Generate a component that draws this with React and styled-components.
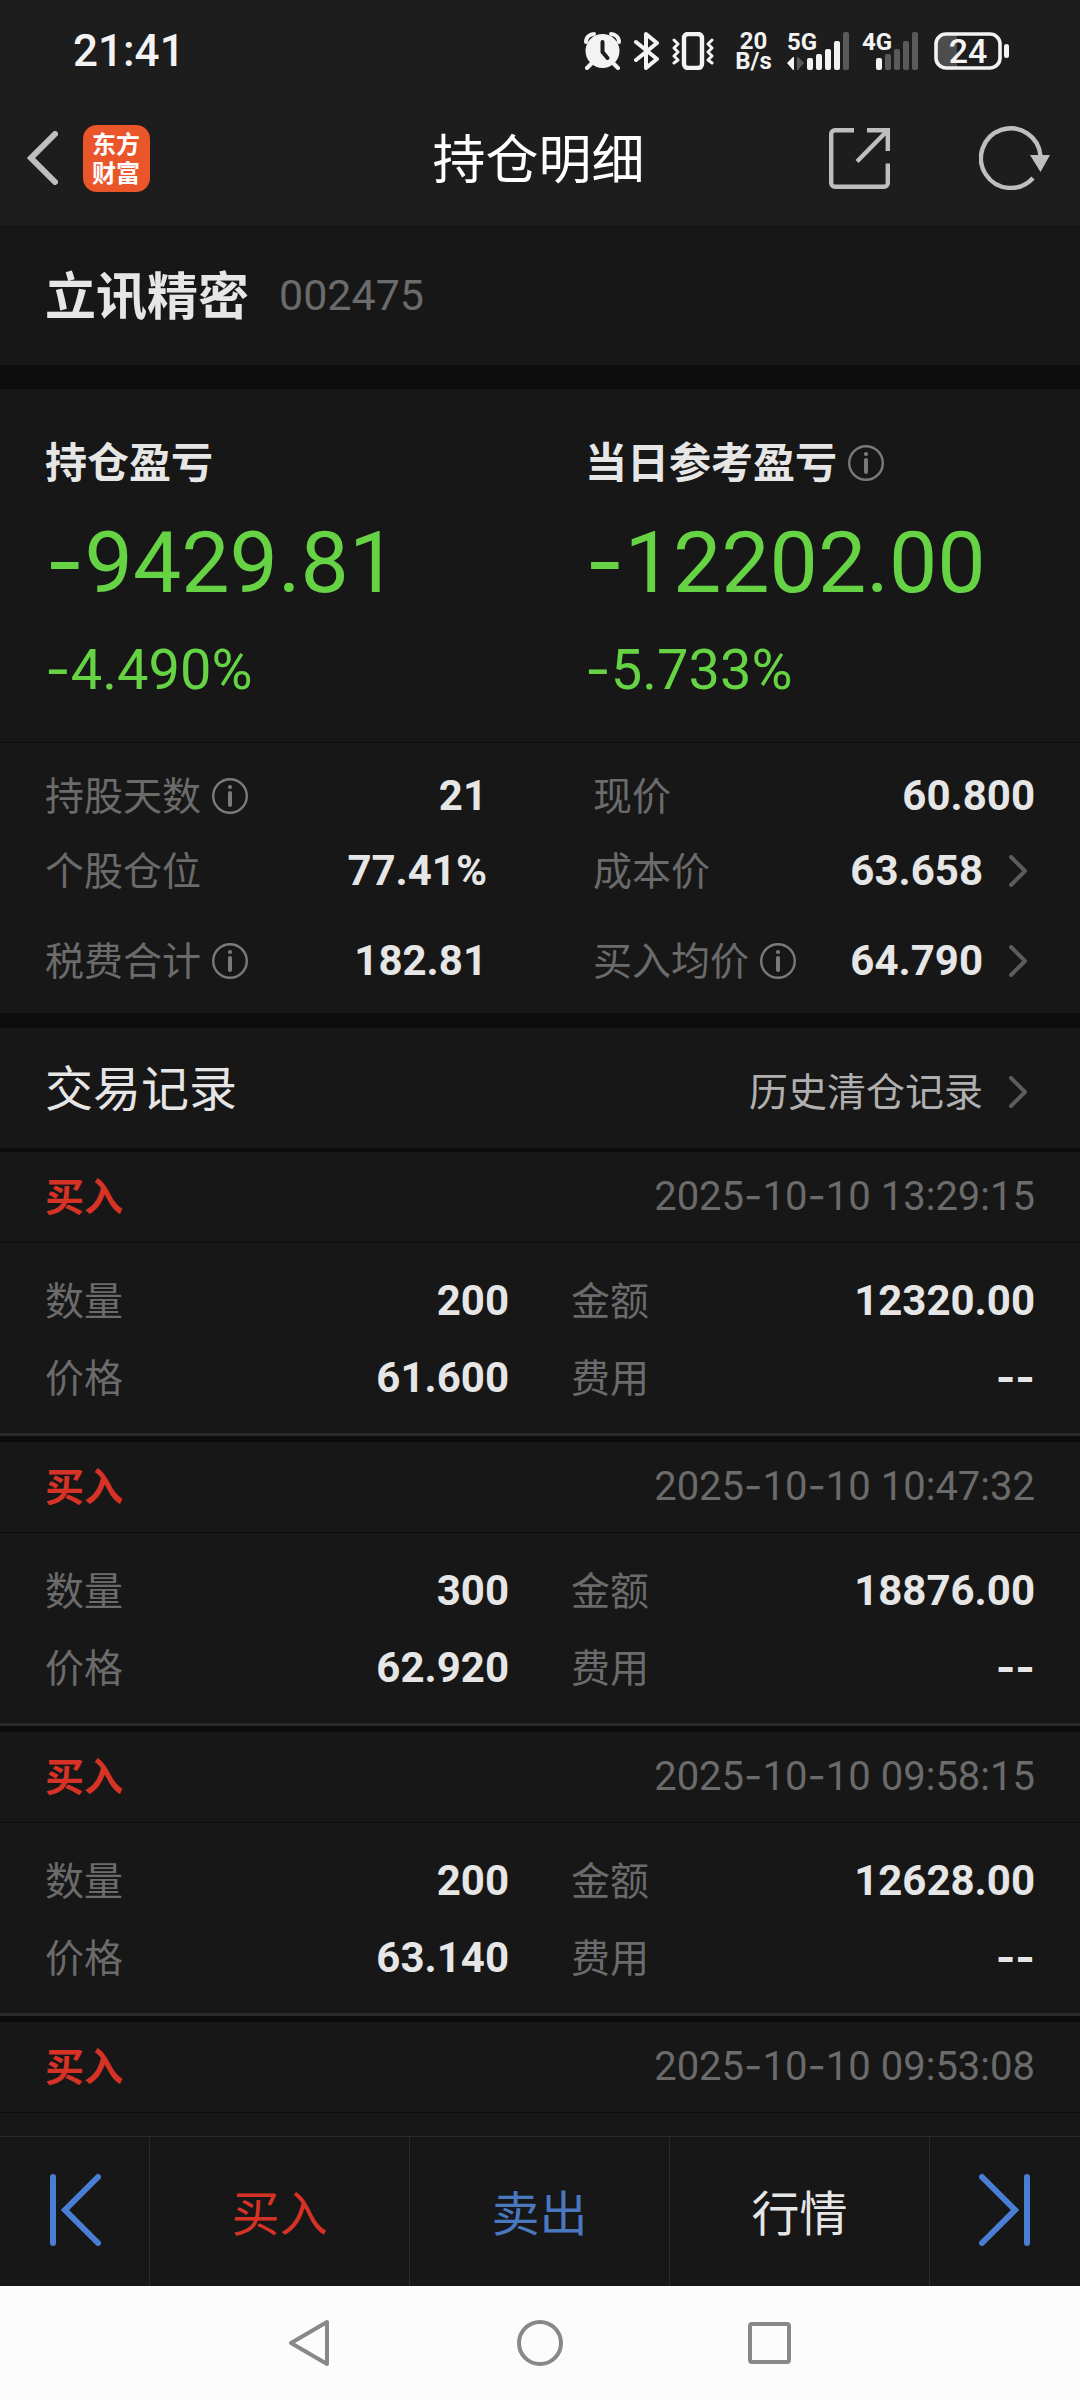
import React from 'react';
import styled, { createGlobalStyle } from 'styled-components';


const GlobalStyle = createGlobalStyle`
	*, *::before, *::after{
		box-sizing: border-box;
	}

	:root{
		--color-bar: #1d1d1d;
		--color-panel: #171717;
		--color-gap: #0c0c0c;
		--color-line: #2a2a2a;
		--color-text: #e6e6e6;
		--color-muted: #6b6b6b;
		--color-icon: #bfbfbf;
		--color-green: #66d345;
		--color-red: #d63326;
		--color-blue: #4a7dd4;
		--font-cjk: "Noto Sans CJK SC", sans-serif;
		--font-num: Roboto, "Noto Sans CJK SC", sans-serif;
	}

	body{
		margin: 0;
		background: var(--color-panel);
		color: var(--color-text);
		font-family: var(--font-cjk);
	}

	button{
		display: flex;
		align-items: center;
		padding: 0;
		border: 0;
		background: none;
		color: inherit;
		font: inherit;
	}

	svg{
		display: block;
		flex: none;
	}

	h1, h2, h3, p{
		margin: 0;
	}
`

const Page = styled.div`
	display: flex;
	flex-direction: column;
	height: 100vh;
`

const StatusBar = styled.div`
	display: flex;
	align-items: center;
	justify-content: space-between;
	height: 91px;
	padding: 11px 71px 0 73px;
	background: var(--color-bar);
	color: #f3f3f3;
	font-family: var(--font-num);
	font-weight: 500;
`

const Clock = styled.span`
	font-size: 44px;
	line-height: 48px;
`

const StatusIcons = styled.div`
	display: flex;
	align-items: center;
	gap: 13px;
`

const Speed = styled.div`
	width: 41px;
	font-size: 24px;
	font-weight: 700;
	line-height: 20px;
	text-align: center;
`

const AppBar = styled.header`
	display: grid;
	grid-template-columns: 1fr auto 1fr;
	align-items: center;
	height: 134px;
	padding: 0 30px 0 27px;
	background: var(--color-bar);
	color: var(--color-icon);
`

const AppBarSide = styled.div`
	display: flex;
	align-items: center;
	justify-content: ${props => props.$end ? 'flex-end' : 'flex-start'};
	gap: ${props => props.$end ? '89px' : '25px'};
`

const Logo = styled.div`
	width: 67px;
	height: 67px;
	padding: 3px 9px;
	border-radius: 14px;
	background: #ea552a;
	color: #fff;
	font-size: 24px;
	font-weight: 700;
	line-height: 29px;
`

// han glyphs sit low in their line box, the padding lifts them back to the middle
const Han = styled.span`
	display: block;
	padding-bottom: 6px;
`

const Title = styled.h1`
	padding-bottom: 4px;
	color: #fff;
	font-size: 53px;
	font-weight: 400;
	line-height: 60px;
`

const Stock = styled.section`
	display: flex;
	align-items: center;
	gap: 30px;
	height: 140px;
	padding: 0 45px;
	background: var(--color-panel);
`

const StockName = styled.h2`
	padding-bottom: 4px;
	font-size: 51px;
	font-weight: 700;
	line-height: 60px;
`

const StockCode = styled.span`
	color: var(--color-muted);
	font-family: var(--font-num);
	font-size: 43px;
	line-height: 60px;
`

const Gap = styled.div`
	flex: none;
	height: ${props => props.$size}px;
	background: var(--color-gap);
`

const Profit = styled.section`
	display: grid;
	grid-template-columns: 1fr 1fr;
	padding: 44px 0 37px;
	border-bottom: 1px solid var(--color-gap);
`

const ProfitItem = styled.div`
	padding-left: 45px;
	color: var(--color-green);
	font-family: var(--font-num);
`

const ProfitLabel = styled.div`
	display: flex;
	align-items: center;
	gap: 11px;
	height: 60px;
	color: var(--color-text);
	font-family: var(--font-cjk);
	font-size: 42px;
	font-weight: 700;
	line-height: 48px;
`

const ProfitAmount = styled.p`
	margin: 20px 0 22px;
	font-size: 86px;
	line-height: 100px;
`

const ProfitRate = styled.p`
	font-size: 56px;
	line-height: 70px;
`

const Dash = styled.span`
	font-family: Inter, sans-serif;
	line-height: 1;
`

const Details = styled.section`
	display: grid;
	grid-template-columns: 1fr 1fr;
	grid-template-rows: 75px 75px 105px;
	column-gap: 106px;
	padding: 15px 45px 0;
`

const Field = styled.div`
	display: flex;
	align-items: center;
	justify-content: space-between;
`

const Label = styled.span`
	display: flex;
	align-items: center;
	gap: 11px;
	color: var(--color-muted);
	font-size: 39px;
	line-height: 48px;
`

const Value = styled.span`
	font-family: var(--font-num);
	font-size: 42px;
	font-weight: 700;
	line-height: 48px;
`

const LinkButton = styled.button`
	gap: 26px;
	padding-right: 8px;
	color: #b0b0b0;
	font-size: 39px;
	line-height: 48px;

	${Value}{
		color: var(--color-text);
	}
`

const InfoButton = styled.button`
	color: #7a7a7a;
`

const ListHead = styled.div`
	display: flex;
	align-items: baseline;
	justify-content: space-between;
	flex: none;
	height: 120px;
	padding: 27px 45px 0;
`

const ListTitle = styled.h2`
	font-size: 48px;
	font-weight: 400;
	line-height: 60px;
`

const Records = styled.main`
	flex: 1;
	min-height: 0;
	overflow: hidden;
`

const Record = styled.article`
	&:not(:last-child){
		border-bottom: 6px solid var(--color-gap);
	}
`

const RecordHead = styled.div`
	display: flex;
	align-items: center;
	justify-content: space-between;
	height: 91px;
	padding: 0 45px;
	border-bottom: 1px solid var(--color-gap);
`

const Side = styled.h3`
	color: var(--color-red);
	font-size: 39px;
	font-weight: 700;
	line-height: 48px;
`

const Time = styled.time`
	color: var(--color-muted);
	font-family: var(--font-num);
	font-size: 40px;
	line-height: 48px;
`

const RecordBody = styled.div`
	display: grid;
	grid-template-columns: 1fr 1fr;
	grid-auto-rows: 77px;
	column-gap: 62px;
	padding: 19px 45px 17px;
	border-bottom: 3px solid var(--color-line);
`

const Actions = styled.nav`
	display: flex;
	flex: none;
	height: 150px;
	border-top: 1px solid var(--color-line);
`

const Action = styled.button`
	flex: ${props => props.$icon ? '0 0 150px' : '1'};
	justify-content: center;
	padding-bottom: 4px;
	color: ${props => props.$color || 'var(--color-text)'};
	font-size: 48px;
	line-height: 60px;

	&:not(:last-child){
		border-right: 1px solid var(--color-line);
	}
`

const SystemNav = styled.div`
	display: flex;
	align-items: center;
	justify-content: center;
	flex: none;
	gap: 184px;
	height: 114px;
	background: #fcfcfc;
	color: #888;
`

const records = [
	{ time: '2025-10-10 13:29:15', count: '200', amount: '12320.00', price: '61.600' },
	{ time: '2025-10-10 10:47:32', count: '300', amount: '18876.00', price: '62.920' },
	{ time: '2025-10-10 09:58:15', count: '200', amount: '12628.00', price: '63.140' },
	{ time: '2025-10-10 09:53:08' },
]

// Roboto's hyphen is too short next to digits
const Num = ({ children }) => children.split(/(-+)/).map((part, i) => (
	part.startsWith('-') ? <Dash key={i}>{part}</Dash> : part
))

const Chevron = () => (
	<svg width="18" height="32" viewBox="0 0 18 32" fill="none" stroke="#5c5c5c" strokeWidth="4" strokeLinecap="round" strokeLinejoin="round">
		<path d="M2 2 16 16 2 30" />
	</svg>
)

const Info = () => (
	<InfoButton aria-label="说明">
		<svg width="36" height="36" viewBox="0 0 36 36" fill="none" stroke="currentColor" strokeLinecap="round">
			<circle cx="18" cy="18" r="16.8" strokeWidth="2.4" />
			<path d="M18 15v12" strokeWidth="4" />
			<circle cx="18" cy="9" r="2.1" fill="currentColor" stroke="none" />
		</svg>
	</InfoButton>
)

const Alarm = () => (
	<svg width="37" height="38" viewBox="0 0 37 38" fill="none" strokeLinecap="round">
		<path d="M2 10C2 5 6 2 10 2M35 10C35 5 31 2 27 2" stroke="currentColor" strokeWidth="4" />
		<path d="M7 32 3 36M30 32 34 36" stroke="currentColor" strokeWidth="4" />
		<circle cx="18.5" cy="19" r="17" fill="currentColor" />
		<path d="M18.5 10v10l5 6" stroke="#1d1d1d" strokeWidth="4" />
	</svg>
)

const Bluetooth = () => (
	<svg width="25" height="38" viewBox="0 0 25 38" fill="none" stroke="currentColor" strokeWidth="4" strokeLinejoin="round" strokeLinecap="round">
		<path d="M2 10 23 27 12 36V2l11 9L2 28" />
	</svg>
)

const Vibrate = () => (
	<svg width="48" height="38" viewBox="0 0 48 38" fill="none" stroke="currentColor" strokeLinejoin="round" strokeLinecap="round">
		<rect x="12" y="2" width="18" height="34" rx="4" strokeWidth="4.4" />
		<path d="M2 8 6 12 2 16 6 20 2 24 6 28 2 31M40 8 36 12 40 16 36 20 40 24 36 28 40 31" strokeWidth="3" />
	</svg>
)

const bars = [[58, 12], [54, 16], [49, 21], [41, 29], [32, 38]]

const Signal = ({ name, level, arrows, width, start }) => (
	<svg width={width} height="50" viewBox={`0 26 ${width} 50`} fill="currentColor">
		<text x="0" y="50" fontSize="24" fontWeight="700">{name}</text>
		{arrows && <path d="M0 63 6 57h1v13H6z" />}
		{arrows && <path d="M17 63 11 57h-1v13h1z" fill="#5a5a5a" />}
		{bars.map(([y, height], i) => (
			<rect key={i} x={start + i * 9} y={y} width="6" height={height} rx="2" fill={i < level ? 'currentColor' : '#5a5a5a'} />
		))}
	</svg>
)

const Battery = () => (
	<svg width="75" height="38" viewBox="0 0 75 38">
		<path d="M12 2h11v34H12A10 10 0 0 1 2 26V12A10 10 0 0 1 12 2z" fill="#4d4d4d" />
		<rect x="2" y="2" width="64" height="34" rx="10" fill="none" stroke="currentColor" strokeWidth="3.6" />
		<rect x="70" y="12" width="5" height="14" rx="2.5" fill="currentColor" />
		<text x="34" y="31" fontSize="34" textAnchor="middle" fill="currentColor">24</text>
	</svg>
)

const App = () => {
  return (
  	<>
  		<GlobalStyle />
  		<Page>
  			<StatusBar>
  				<Clock>21:41</Clock>
  				<StatusIcons>
  					<Alarm />
  					<Bluetooth />
  					<Vibrate />
  					<Speed>20<br />B/s</Speed>
  					<Signal name="5G" level={4} arrows width={62} start={20} />
  					<Signal name="4G" level={1} width={59} start={14} />
  					<Battery />
  				</StatusIcons>
  			</StatusBar>
  			<AppBar>
  				<AppBarSide>
  					<button aria-label="返回">
  						<svg width="31" height="54" viewBox="0 0 31 54" fill="none" stroke="currentColor" strokeWidth="6" strokeLinecap="round">
  							<path d="M28 3 4 27 28 51" />
  						</svg>
  					</button>
  					<Logo>东方<br />财富</Logo>
  				</AppBarSide>
  				<Title>持仓明细</Title>
  				<AppBarSide $end>
  					<button aria-label="分享">
  						<svg width="61" height="61" viewBox="0 0 61 61" fill="none" stroke="currentColor" strokeWidth="4.4">
  							<path d="M25 2.2H6A3.8 3.8 0 0 0 2.2 6v49A3.8 3.8 0 0 0 6 58.8h49a3.8 3.8 0 0 0 3.8-3.8V35.5" />
  							<path d="M38 2.2h20.8V23M58 3 28 33.5" />
  						</svg>
  					</button>
  					<button aria-label="刷新">
  						<svg width="71" height="64" viewBox="0 0 71 64" fill="none" stroke="currentColor" strokeWidth="4.4">
  							<path d="M61.5 30A29.8 29.8 0 1 0 54 52" />
  							<path d="M51 29h20L61.5 46z" fill="currentColor" stroke="none" />
  						</svg>
  					</button>
  				</AppBarSide>
  			</AppBar>
  			<Stock>
  				<StockName>立讯精密</StockName>
  				<StockCode>002475</StockCode>
  			</Stock>
  			<Gap $size={24} />
  			<Profit>
  				<ProfitItem>
  					<ProfitLabel><Han>持仓盈亏</Han></ProfitLabel>
  					<ProfitAmount><Num>-9429.81</Num></ProfitAmount>
  					<ProfitRate><Num>-4.490%</Num></ProfitRate>
  				</ProfitItem>
  				<ProfitItem>
  					<ProfitLabel><Han>当日参考盈亏</Han><Info /></ProfitLabel>
  					<ProfitAmount><Num>-12202.00</Num></ProfitAmount>
  					<ProfitRate><Num>-5.733%</Num></ProfitRate>
  				</ProfitItem>
  			</Profit>
  			<Details>
  				<Field>
  					<Label><Han>持股天数</Han><Info /></Label>
  					<Value>21</Value>
  				</Field>
  				<Field>
  					<Label><Han>现价</Han></Label>
  					<Value>60.800</Value>
  				</Field>
  				<Field>
  					<Label><Han>个股仓位</Han></Label>
  					<Value>77.41%</Value>
  				</Field>
  				<Field>
  					<Label><Han>成本价</Han></Label>
  					<LinkButton><Value>63.658</Value><Chevron /></LinkButton>
  				</Field>
  				<Field>
  					<Label><Han>税费合计</Han><Info /></Label>
  					<Value>182.81</Value>
  				</Field>
  				<Field>
  					<Label><Han>买入均价</Han><Info /></Label>
  					<LinkButton><Value>64.790</Value><Chevron /></LinkButton>
  				</Field>
  			</Details>
  			<Gap $size={15} />
  			<ListHead>
  				<ListTitle>交易记录</ListTitle>
  				<LinkButton><Han>历史清仓记录</Han><Chevron /></LinkButton>
  			</ListHead>
  			<Gap $size={4} />
  			<Records>
  				{records.map(item => (
  					<Record key={item.time}>
  						<RecordHead>
  							<Side><Han>买入</Han></Side>
  							<Time><Num>{item.time}</Num></Time>
  						</RecordHead>
  						{item.count && (
  							<RecordBody>
  								<Field>
  									<Label><Han>数量</Han></Label>
  									<Value>{item.count}</Value>
  								</Field>
  								<Field>
  									<Label><Han>金额</Han></Label>
  									<Value>{item.amount}</Value>
  								</Field>
  								<Field>
  									<Label><Han>价格</Han></Label>
  									<Value>{item.price}</Value>
  								</Field>
  								<Field>
  									<Label><Han>费用</Han></Label>
  									<Value><Num>--</Num></Value>
  								</Field>
  							</RecordBody>
  						)}
  					</Record>
  				))}
  			</Records>
  			<Actions>
  				<Action $icon $color="var(--color-blue)" aria-label="上一个">
  					<svg width="52" height="74" viewBox="0 0 52 74" fill="none" stroke="currentColor" strokeWidth="6" strokeLinecap="round">
  						<path d="M4 4v66M49 4 16 37 49 70" />
  					</svg>
  				</Action>
  				<Action $color="var(--color-red)">买入</Action>
  				<Action $color="#4a78bf">卖出</Action>
  				<Action>行情</Action>
  				<Action $icon $color="var(--color-blue)" aria-label="下一个">
  					<svg width="52" height="74" viewBox="0 0 52 74" fill="none" stroke="currentColor" strokeWidth="6" strokeLinecap="round">
  						<path d="M48 4v66M3 4 36 37 3 70" />
  					</svg>
  				</Action>
  			</Actions>
  			<SystemNav>
  				<button aria-label="Back">
  					<svg width="46" height="48" viewBox="0 0 46 48" fill="none" stroke="currentColor" strokeWidth="4" strokeLinejoin="round">
  						<path d="M40 3v42L4 24z" />
  					</svg>
  				</button>
  				<button aria-label="Home">
  					<svg width="46" height="48" viewBox="0 0 46 48" fill="none" stroke="currentColor" strokeWidth="4">
  						<circle cx="23" cy="24" r="21" />
  					</svg>
  				</button>
  				<button aria-label="Recents">
  					<svg width="46" height="48" viewBox="0 0 46 48" fill="none" stroke="currentColor" strokeWidth="4">
  						<rect x="3" y="5" width="39" height="38" rx="2" />
  					</svg>
  				</button>
  			</SystemNav>
  		</Page>
  	</>
  )
}

export default App;
